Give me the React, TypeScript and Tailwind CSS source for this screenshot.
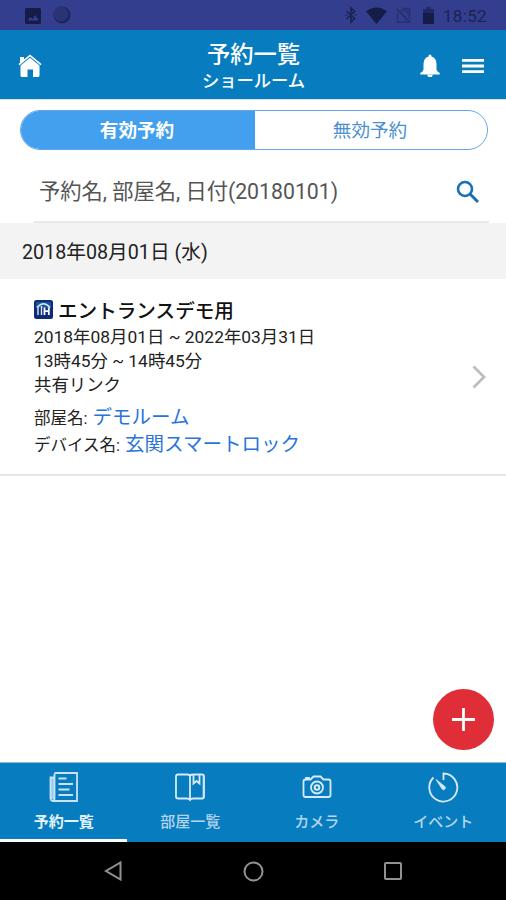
import type { ReactNode } from 'react';

function StatusBar() {
  return (
    <div className="flex h-[30px] shrink-0 items-center bg-[#333e8f] pl-[25px] pr-[18px] text-[#1c2352]">
      <svg width="16" height="16" viewBox="0 0 16 16" className="mt-px">
        <rect width="16" height="16" rx="1.5" fill="#161c48" />
        <path d="M2.500 12.500 5.500 9l2 2.200L10.300 7l3.400 5.500z" fill="#333e8f" />
      </svg>
      <svg width="18" height="18" viewBox="0 0 18 18" className="ml-3">
        <circle cx="9" cy="9" r="8.500" fill="#1e255c" />
        <circle cx="8" cy="8" r="7.500" fill="#2a3374" />
      </svg>
      <div className="flex-1" />
      <svg width="12" height="18" viewBox="0 0 12 18" fill="none" stroke="currentColor" strokeWidth="1.700">
        <path d="M1.500 5 9.500 12.500 6 16V2l3.500 3.500L1.500 13" />
        <path d="M.5 9h1.500M10 9h1.500" />
      </svg>
      <svg width="21" height="17" viewBox="0 0 21 17" className="ml-[9px]">
        <path d="M0 4.200Q10.500-3.400 21 4.200L10.500 17z" fill="#161c48" />
      </svg>
      <svg width="15" height="16" viewBox="0 0 15 16" className="ml-[9px] opacity-50" fill="none" stroke="currentColor">
        <path d="M5 4.500 7.500 1.500H13.500v11M1.500 6v9.300h11.500" strokeWidth="1.400" />
        <path d="M.8 2 14 15.500" strokeWidth="1.800" />
        <path d="M6 2h7v8z" fill="currentColor" stroke="none" opacity=".5" />
      </svg>
      <svg width="11" height="17" viewBox="0 0 11 17" className="ml-3" fill="#161c48">
        <path d="M3.500 0h4v2H11v5H0V2h3.500z" opacity=".6" />
        <path d="M0 6h11v11H0z" />
      </svg>
      <span className="ml-[9px] mt-px w-[45px] whitespace-nowrap text-[17px] leading-[20px] tracking-[0.3px]">18:52</span>
    </div>
  );
}

function Header() {
  return (
    <header className="grid h-[69px] shrink-0 grid-cols-[1fr_auto_1fr] items-center bg-[#077dbf] pl-[18px] pr-[22px] text-white">
      <svg width="24" height="24" viewBox="0 0 24 24" className="mt-0.5" fill="currentColor">
        <path d="M2 3h4v4L2 10z" />
        <path d="M12 .5 23.500 10l-1 1.200L12 2.600 1.500 11.200.5 10z" />
        <path d="M12 3.800 21.500 11.500V21.500q0 1.500-1.500 1.500h-5v-7.500H9.500V23H4q-1.500 0-1.500-1.500v-10z" />
      </svg>
      <div className="ml-[5px] mt-[5px] text-center">
        <h1 className="text-[23.300px] font-medium leading-[28px]">予約一覧</h1>
        <p className="text-[17.300px] font-medium leading-[25px]">ショールーム</p>
      </div>
      <div className="mt-[2px] flex items-center justify-end gap-[22px]">
        <svg width="20" height="24" viewBox="0 0 20 24" fill="currentColor">
          <path d="M10 .5q1.500 0 1.500 2Q16.500 4 16.500 10v5.500q0 1.500 3.200 3.500v1.500H.3V19q3.200-2 3.200-3.500V10Q3.500 4 8.500 2.500q0-2 1.500-2z" />
          <path d="M7.300 20.500h5.400a2.700 2.600 0 0 1-5.400 0z" />
        </svg>
        <svg width="22" height="16" viewBox="0 0 22 16" fill="currentColor">
          <path d="M0 1h22v2.800H0zM0 6.600h22v2.800H0zM0 12.200h22V15H0z" />
        </svg>
      </div>
    </header>
  );
}

function Segment() {
  return (
    <div className="ml-5 mr-[18px] mt-[10px] flex h-10 shrink-0 overflow-hidden rounded-full border border-[#65a5eb] text-[18.600px] leading-[40px]">
      <button className="w-[234px] bg-[#43a0ee] pr-0.5 font-bold text-white">有効予約</button>
      <button className="flex-1 pr-0.5 text-[#4a8fd0]">無効予約</button>
    </div>
  );
}

function Search() {
  return (
    <div className="ml-[34px] mr-[17px] flex h-[73px] shrink-0 items-center justify-between border-b-2 border-[#e8e8e8] pl-[5px] pr-[9px]">
      <span className="mt-[13px] text-[21.250px] leading-[28px] text-[#555]">予約名, 部屋名, 日付(20180101)</span>
      <svg width="24" height="24" viewBox="0 0 24 24" fill="none" stroke="#1670b8" className="mt-[12px]">
        <circle cx="9" cy="9" r="7" strokeWidth="2.600" />
        <path d="m14 14 8 8" strokeWidth="3" />
      </svg>
    </div>
  );
}

function Reservation() {
  return (
    <article className="flex h-[197px] shrink-0 items-center justify-between border-b-2 border-[#e5e5e5] pl-[34px] pr-5 text-[#222]">
      <div className="pt-[5px] text-[17.400px] leading-[24px]">
        <div className="flex h-[26px] items-center gap-[5px]">
          <svg width="19" height="19" viewBox="0 0 19 19" className="-mt-[5px]">
            <rect width="19" height="19" rx="2.500" fill="#0c2c75" />
            <path d="M2 2h15v6H2z" fill="#2468b5" opacity=".65" />
            <path d="M3 7.500Q9.500 0 16 7.500M4 7v8M7.500 6v9" fill="none" stroke="#d5e8fa" strokeWidth="1.400" />
            <path d="M10.500 7.500V15M14.800 7.500V15M10.500 11.200h4.300" fill="none" stroke="#fff" strokeWidth="1.800" />
          </svg>
          <h2 className="text-[19.600px] font-medium leading-[26px] text-[#111]">エントランスデモ用</h2>
        </div>
        <p>2018年08月01日 ~ 2022年03月31日</p>
        <p>13時45分 ~ 14時45分</p>
        <p>共有リンク</p>
        <p className="mt-2 text-[16.500px] leading-[26px]">部屋名: <a className="ml-px text-[19.500px] text-[#2874dc]">デモルーム</a></p>
        <p className="text-[16.500px] leading-[26px]">デバイス名: <a className="ml-px text-[19.500px] text-[#2874dc]">玄関スマートロック</a></p>
      </div>
      <svg width="14" height="24" viewBox="0 0 14 24" fill="none" stroke="#bdbdbd" strokeWidth="2.800">
        <path d="m1.500 1.500 10.500 10.500L1.500 22.500" />
      </svg>
    </article>
  );
}

function Tab({ label, active, children }: { label: string; active?: boolean; children: ReactNode }) {
  return (
    <button className={`flex flex-1 flex-col items-center border-b-[3px] pl-px pt-[8px] ${active ? 'border-white font-bold text-[#e3f2fc]' : 'border-transparent font-medium text-[#b5d5ed]'}`}>
      <svg width="32" height="32" viewBox="0 0 32 32" fill="none" stroke={active ? '#c9e3f6' : '#d8eafa'} strokeWidth="1.800">
        {children}
      </svg>
      <span className="mt-[8px] text-[15px] leading-[22px]">{label}</span>
    </button>
  );
}

function TabBar() {
  return (
    <nav className="flex h-[80px] shrink-0 border-t border-[#8abce2] bg-[#077dbf]">
      <Tab label="予約一覧" active>
        <path d="M6.500 2h22.500v28H5q-2.500 0-2.500-3V6.500h4" />
        <path d="M6.500 2.500V27q0 3-2 3" />
        <path d="M4.500 7v21" strokeWidth="3.500" opacity=".75" />
        <path d="M10.500 7.500h8M10.500 13H25M10.500 18.500h11M10.500 24H25" />
      </Tab>
      <Tab label="部屋一覧">
        <path d="M16 4.500Q15 3.500 13 3.500H4q-2 0-2 2v20q0 2 2 2h9q2 0 3 1.500 1-1.500 3-1.500h9q2 0 2-2v-20q0-2-2-2h-9q-2 0-3 1zM16 4.500v25" />
        <path d="M19.500 4v8.500l3-2.500 3 2.500V4" />
        <path d="M29.500 5v21" strokeWidth="2" opacity=".6" />
      </Tab>
      <Tab label="カメラ">
        <path d="M4.500 8.500h5l3-3h7l3 3h5q2 0 2 2v13.500q0 2-2 2h-23q-2 0-2-2v-13.500q0-2 2-2zM5 8.500V6.800h3v1.700" />
        <circle cx="16" cy="16.500" r="6" />
        <circle cx="16" cy="16.500" r="2.300" strokeWidth="2" />
      </Tab>
      <Tab label="イベント">
        <path d="M16.500 9V2.500A14 14 0 1 1 6.500 6.500" />
        <path d="M9 8.500 17.800 15.500a1.700 1.700 0 0 1-2.600 2.600z" fill="#d8eafa" strokeWidth=".8" />
      </Tab>
    </nav>
  );
}

function AndroidNav() {
  return (
    <div className="flex h-[58px] shrink-0 items-center justify-between bg-black px-[104px]">
      <svg width="18" height="20" viewBox="0 0 18 20" fill="none" stroke="#929292" strokeWidth="2">
        <path d="M16.500 1.500v17L2 10z" />
      </svg>
      <svg width="21" height="21" viewBox="0 0 21 21" fill="none" stroke="#929292" strokeWidth="2">
        <circle cx="10.500" cy="10.500" r="9" />
      </svg>
      <svg width="18" height="18" viewBox="0 0 18 18" fill="none" stroke="#929292" strokeWidth="2">
        <rect x="1" y="1" width="16" height="16" rx="1" />
      </svg>
    </div>
  );
}

export default function App() {
  return (
    <div lang="ja" className="flex h-[900px] w-[506px] flex-col overflow-hidden bg-white font-['Roboto','Noto_Sans_CJK_JP',sans-serif]">
      <StatusBar />
      <Header />
      <div className="h-px w-full shrink-0 bg-[#d5e0f0]" />
      <main className="relative flex flex-1 flex-col">
        <Segment />
        <Search />
        <div className="h-[56px] shrink-0 bg-[#f3f3f3] pl-[22px] pt-px text-[19.700px] leading-[58px] text-[#222]">2018年08月01日 (水)</div>
        <Reservation />
        <button aria-label="追加" className="absolute bottom-[12px] right-[12px] flex size-[61px] items-center justify-center rounded-full bg-[#df2e38]">
          <svg width="23" height="23" viewBox="0 0 23 23" stroke="white" strokeWidth="2.800">
            <path d="M11.500 0v23M0 11.500h23" />
          </svg>
        </button>
      </main>
      <TabBar />
      <AndroidNav />
    </div>
  );
}
